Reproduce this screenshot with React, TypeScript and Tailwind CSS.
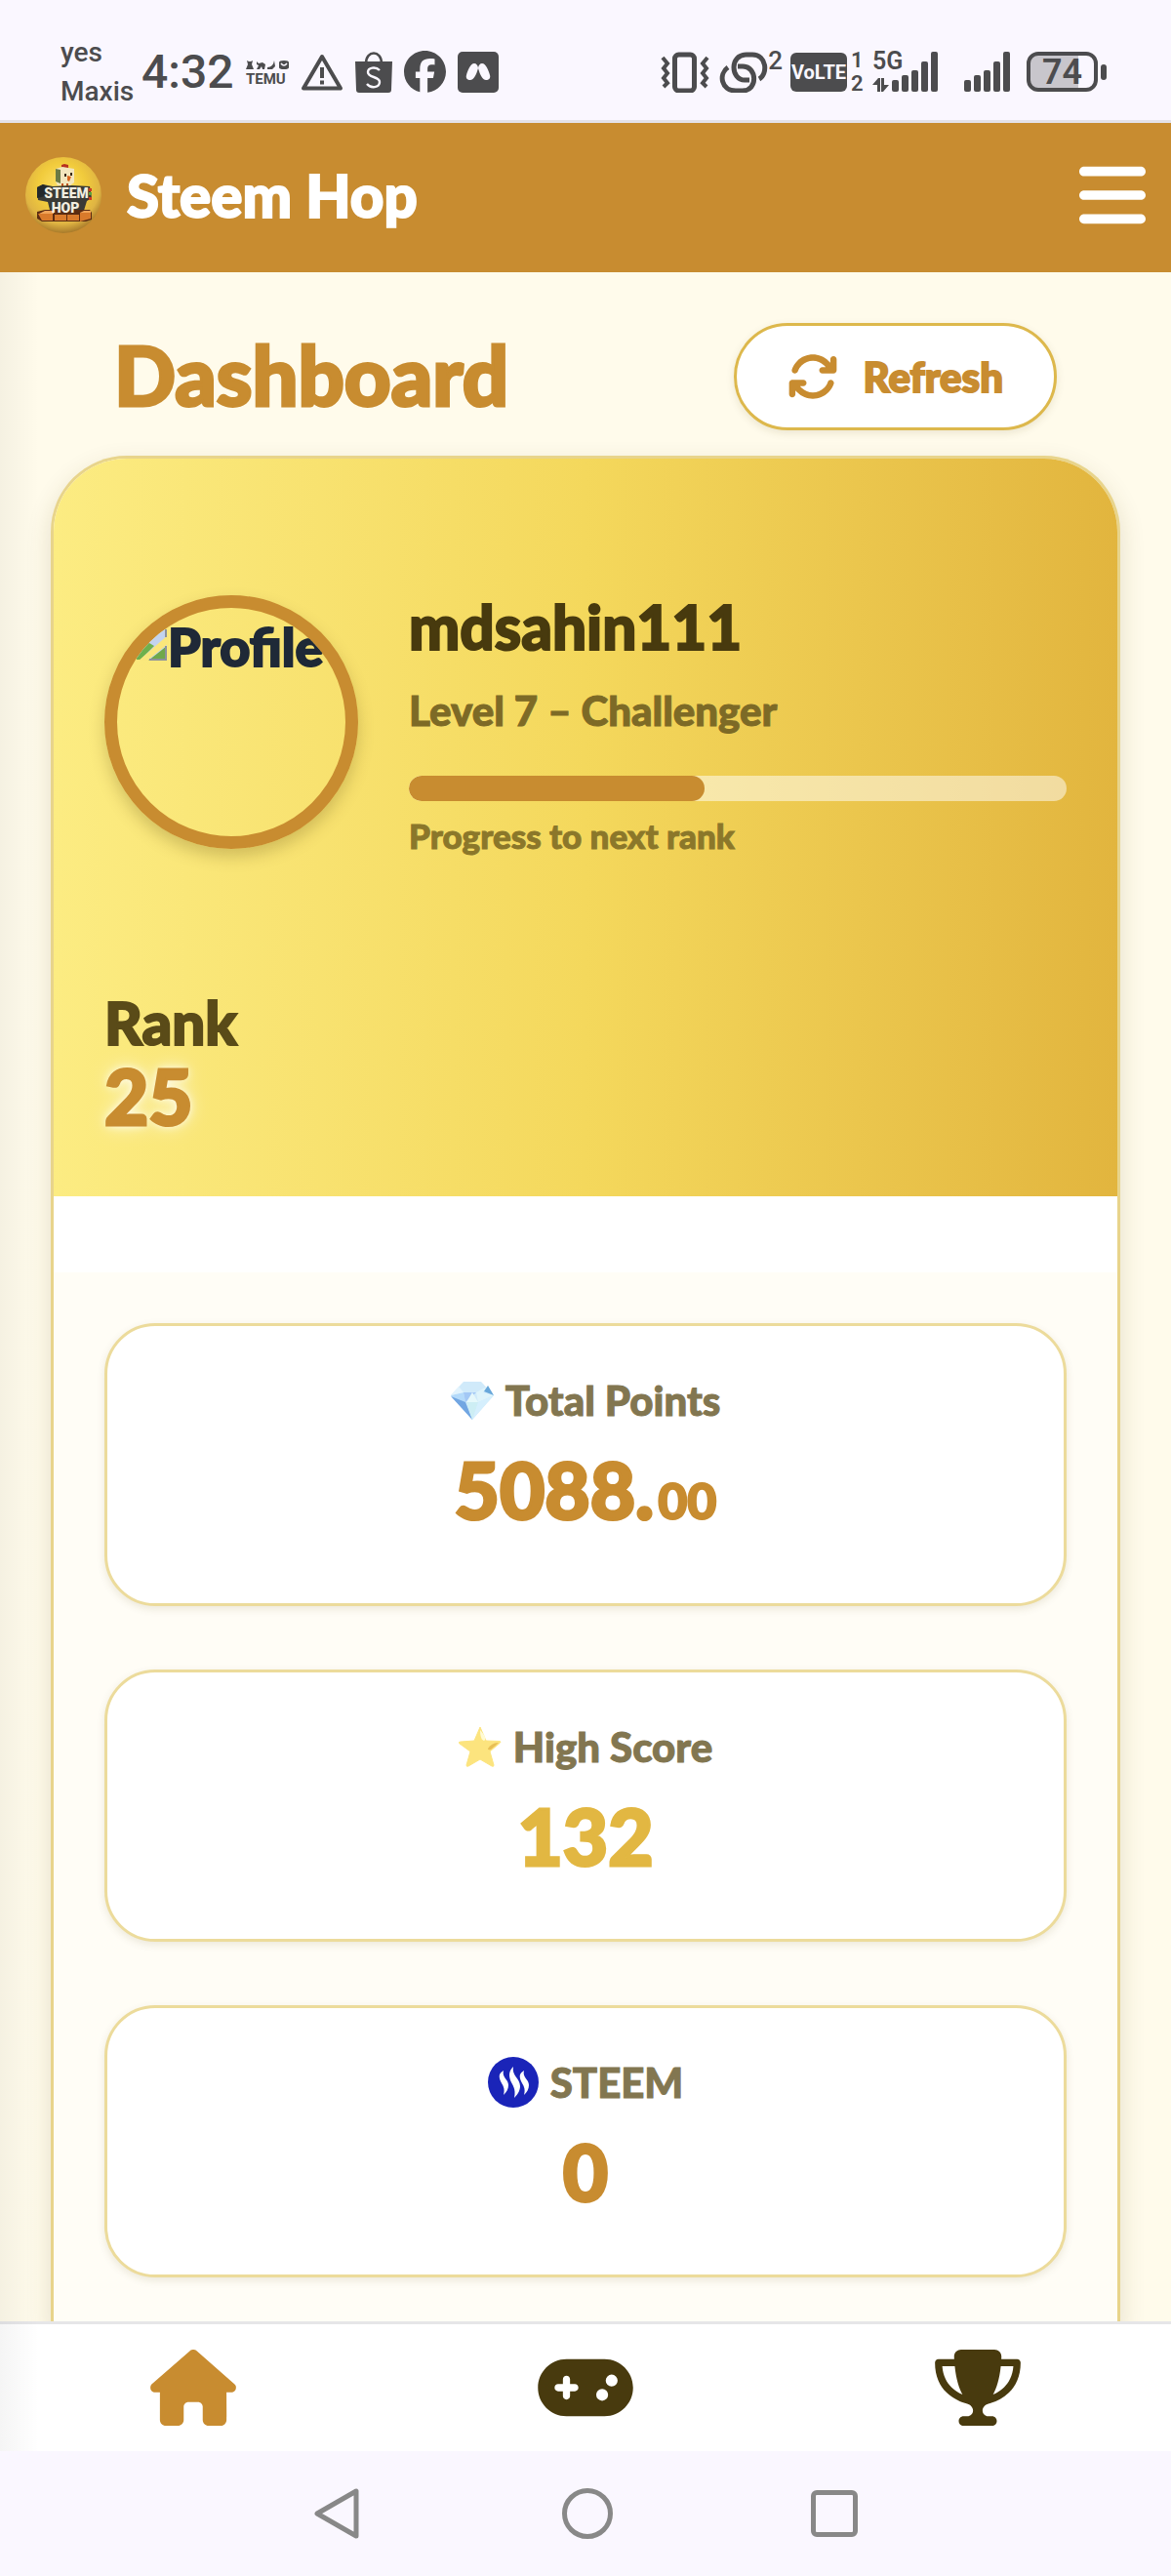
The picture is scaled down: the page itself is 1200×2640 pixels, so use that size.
import type { ReactNode } from "react";
import { FaArrowsRotate, FaBars, FaFacebook, FaGamepad, FaHouse, FaTrophy } from "react-icons/fa6";

function TemuIcon() {
  return (
    <svg viewBox="0 0 44 26" className="h-[26px] w-11 overflow-visible" fill="#4c4c4e" aria-label="Temu">
      <path d="M1 1l2 1h2l2-1-1 4 2 5H0l2-5zM11 2l2 2 4-1 3 2-1 5h-2l-1-3-2 3h-3l2-4-2-1zM22 8q6 0 7-7l1 6-3 3h-5zM34 3q0-2 5-2t5 2v5q0 2-5 2t-5-2z" />
      <path d="M36 4q3 4 6 0" fill="none" stroke="#faf7ff" strokeWidth="1.500" />
      <text x="0" y="25" fontFamily="Roboto" fontWeight="700" fontSize="15">TEMU</text>
    </svg>
  );
}

function WarningIcon() {
  return (
    <svg viewBox="0 0 44 38" className="h-[38px] w-11" fill="none" stroke="#4c4c4e" strokeWidth="4" strokeLinejoin="round" aria-label="Warning">
      <path d="M22 3L41 35.500H3z" />
      <path d="M22 14v11M22 27.500v4" />
    </svg>
  );
}

function ShopIcon() {
  return (
    <svg viewBox="0 0 38 42" className="h-[42px] w-[38px]" aria-label="Shopping">
      <path d="M0 10h38l-1 29q0 3-3 3H4q-3 0-3-3z" fill="#4c4c4e" />
      <path d="M11 12c0-14 16-14 16 0" fill="none" stroke="#4c4c4e" strokeWidth="2.500" />
      <path d="M25 19c-4-4-12-3-12 2 0 6 12 4 12 10 0 6-9 7-13 2" fill="none" stroke="#faf7ff" strokeWidth="2.400" />
    </svg>
  );
}

function MotoIcon() {
  return (
    <svg viewBox="0 0 42 42" className="size-[42px]" aria-label="App">
      <rect width="42" height="42" rx="5" fill="#4c4c4e" />
      <path d="M17 12c2 0 4 2 4 5l-1 3c-1 4-4 9-7 9s-5-2-4-5c1-4 4-12 8-12zM25 12c-2 0-4 2-4 5l1 3c1 4 4 9 7 9s5-2 4-5c-1-4-4-12-8-12z" fill="#faf7ff" />
    </svg>
  );
}

function VibrateIcon() {
  return (
    <svg viewBox="0 0 50 42" className="h-[42px] w-[50px]" fill="none" stroke="#4c4c4e" aria-label="Vibrate">
      <rect x="14.500" y="3" width="20" height="37" rx="4" strokeWidth="5" />
      <path d="M2 6l5 6-4 5 4 5-4 5 4 5-4 4M48 6l-5 6 4 5-4 5 4 5-4 5 4 4" strokeWidth="4" />
    </svg>
  );
}

function LinkIcon() {
  return (
    <svg viewBox="0 0 50 42" className="h-[42px] w-[50px]" fill="none" stroke="#4c4c4e" strokeWidth="5" aria-label="Linked">
      <path d="M31 29h-5c-14 0-16-26 2-26h6c15 0 16 20 7 25" />
      <path d="M19 15h5c15 0 16 25 0 25h-7c-15 0-18-17-8-24" />
    </svg>
  );
}

function SignalBars() {
  return (
    <svg viewBox="0 0 48 41" className="h-[41px] w-12" fill="#4c4c4e" aria-label="Signal">
      <rect x="0" y="29" width="7" height="12" rx="2" />
      <rect x="10" y="24" width="7" height="17" rx="2" />
      <rect x="20" y="19" width="7" height="22" rx="2" />
      <rect x="30" y="10" width="7" height="31" rx="2" />
      <rect x="40" y="0" width="7" height="41" rx="2" />
    </svg>
  );
}

function StatusBar() {
  return (
    <div className="flex h-[126px] shrink-0 items-center justify-between border-b-3 border-[#e4e2e9] bg-[#faf7ff] pt-[24px] pr-[66px] pl-[62px] font-['Roboto',sans-serif] text-[#4c4c4e]">
      <div className="flex items-center">
        <div className="w-[83px] text-[28px] leading-[40px] font-medium">
          <div>yes</div>
          <div>Maxis</div>
        </div>
        <div className="text-[48px] leading-[50px] font-medium">4:32</div>
        <div className="ml-3 flex items-center gap-[12px]">
          <TemuIcon />
          <WarningIcon />
          <ShopIcon />
          <FaFacebook className="size-[43px]" aria-label="Facebook" />
          <MotoIcon />
        </div>
      </div>
      <div className="flex items-center">
        <VibrateIcon />
        <div className="ml-2.5 flex items-start">
          <LinkIcon />
          <span className="-mt-1 text-[26px] leading-[26px] font-medium">2</span>
        </div>
        <div className="ml-2 flex h-10 w-[58px] items-center justify-center rounded-md bg-[#4c4c4e] text-[20px] font-bold text-[#faf7ff]">VoLTE</div>
        <div className="ml-1 w-[22px] text-[22px] leading-[24px] font-semibold">
          <div>1</div>
          <div>2</div>
        </div>
        <div className="relative">
          <div className="ml-[20px]">
            <SignalBars />
          </div>
          <span className="absolute -top-1 left-0 text-[25px] leading-[28px] font-semibold">5G</span>
          <svg viewBox="0 0 17 14" className="absolute bottom-0 left-0 h-3.5 w-[17px]" fill="#4c4c4e">
            <path d="M0 7l6-7h2v14H5V7zM17 7l-6 7H9V0h3v7z" />
          </svg>
        </div>
        <div className="ml-[26px]">
          <SignalBars />
        </div>
        <div className="ml-[16px] flex items-center gap-[3px]">
          <div className="flex h-[41px] w-[73px] items-center justify-center rounded-xl border-4 border-[#4c4c4e] bg-linear-to-r from-[#c8c6cc] from-75% to-[#faf7ff] to-75% text-[36px] leading-[36px] font-semibold">74</div>
          <div className="h-4 w-1.5 rounded-full bg-[#4c4c4e]" />
        </div>
      </div>
    </div>
  );
}

function Logo() {
  return (
    <svg viewBox="0 0 78 78" className="size-[78px]" aria-label="Steem Hop logo">
      <defs>
        <radialGradient id="coin" cx="0.48" cy="0.38" r="0.620">
          <stop offset="0" stopColor="#ffe36a" />
          <stop offset="0.500" stopColor="#f1cb3c" />
          <stop offset="0.800" stopColor="#dfb443" />
          <stop offset="1" stopColor="#a87a2a" />
        </radialGradient>
      </defs>
      <circle cx="39" cy="39" r="39" fill="url(#coin)" />
      <path d="M37 8l3-1 4 1v4h-7z" fill="#b8321f" />
      <path d="M31 12l7-2 12 2v14l-4 3H33l-2-4z" fill="#f3e6bd" />
      <path d="M31 12l5 1v14l-5-2z" fill="#6b7a45" />
      <path d="M40 17h2v3h-2zM46 16h2v3h-2z" fill="#3a2a18" />
      <path d="M43 19l4 1-2 5-2-1z" fill="#d9661e" />
      <path d="M37 27h2v5h-2zM42 27h2v5h-2z" fill="#c2541c" />
      <path d="M12 31l6-3 10 2 20-1 18 1 2 12-5 3-4 13H26l-3-12-10-2z" fill="#3b3b36" />
      <path d="M12 31l6-3 4 2-2 10-8 2z" fill="#23282b" />
      <path d="M65 32h3v3h-3zM65 41h3v3h-3z" fill="#cf3b22" />
      <path d="M65 36h3v3h-3z" fill="#5ea03c" />
      <path d="M12 56l8-2h46l2 3v7l-6 2H17l-5-3z" fill="#5b2c12" />
      <path d="M13 58h15v7H17zM30 59h12v6H30zM43 59h12v6H43zM56 57l11-1v7l-11 3z" fill="#d97a2b" />
      <path d="M14 58l6-3h9v3zM56 57l4-2h7v2z" fill="#f0a357" />
      <g fill="#f2eee0" fontFamily="Roboto" fontWeight="900">
        <text x="42" y="42" fontSize="14" textAnchor="middle">STEEM</text>
        <text x="41" y="57" fontSize="14" textAnchor="middle">HOP</text>
      </g>
    </svg>
  );
}

function BrokenImage() {
  return (
    <svg viewBox="0 0 32 32" className="size-8 shrink-0">
      <path d="M0 0h31v31H0z" fill="#c3d3ef" />
      <path d="M0 31V22q6-8 13-8l5 3-14 14z" fill="#6fb04c" />
      <path d="M12 32L31 17v14z" fill="#6fa84a" />
      <path d="M2 32L32 6v9L11 32z" fill="#fae67b" />
      <path d="M30 0v8M30 17v14H13" fill="none" stroke="#8d9299" strokeWidth="2" />
    </svg>
  );
}

function Gem() {
  return (
    <svg viewBox="0 0 44 40" className="h-10 w-11">
      <path d="M13 1h18L44 15 22 40 0 15z" fill="#d0eafa" />
      <path d="M0 15l13-3 2 10 7 18z" fill="#b4dafa" />
      <path d="M0 16l15 6 7 18z" fill="#72a6e2" />
      <path d="M15 22L13 12l13 0z" fill="#a3c8f5" />
      <path d="M0 15l13-3L8 6z" fill="#e2f3fd" />
      <path d="M26 12l11-6-4 6 11 3-16 7z" fill="#dff4fb" />
      <path d="M38 5l6 10-10-4z" fill="#68a7da" />
      <path d="M22 12l6 10H16z" fill="#e6f8fb" />
      <path d="M16 22h12l-6 18z" fill="#cdeef4" />
      <path d="M28 22l16-7-22 25z" fill="#d5effd" />
    </svg>
  );
}

function Star() {
  return (
    <svg viewBox="0 0 44 42" className="h-[42px] w-11">
      <path d="M22 1l6 14 14 .500q2 .500 0 2L32 26l4 14q0 2-2 1l-12-7-12 7q-2 1-2-1l4-14-11-8q-2-2 1-2l14-1z" fill="#fce47e" stroke="#fce47e" strokeLinejoin="round" />
      <path d="M22 4q0 10 4 11 3-2 0-6z" fill="#fffbd5" />
      <path d="M41 17q-7 0-11 6 0 2 3 1z" fill="#e8bf55" />
    </svg>
  );
}

function SteemMark() {
  return (
    <svg viewBox="0 0 52 52" className="size-[52px]">
      <circle cx="26" cy="26" r="26" fill="#1a24b8" />
      <g fill="#fff">
        <path d="M16 14c-2 7 5 9 5 15 0 4-2 7-5 10 2-7-1-10-3-14-2-5-2-8 3-11z" />
        <path d="M26 10c-2 9 7 12 7 20 0 5-3 9-6 12 2-10-2-13-4-18-2-6-1-10 3-14z" />
        <path d="M37 14c-2 7 5 9 5 15 0 4-2 7-5 10 2-7-1-10-3-14-2-5-2-8 3-11z" />
      </g>
    </svg>
  );
}

function StatCard({ icon, label, children }: { icon: ReactNode; label: string; children: ReactNode }) {
  return (
    <article className="rounded-[52px] border-3 border-[#ecdb9b] bg-white px-12 pt-[48px] pb-[66px] text-center shadow-[0_3px_8px_rgba(90,70,20,0.12)]">
      <h3 className="flex h-14 items-center justify-center gap-3 text-[42px] leading-[48px] text-[#827650] [-webkit-text-stroke:1px]">
        {icon}
        {label}
      </h3>
      <div className="mt-[23px] text-[80px] leading-[80px] text-[#c88c30] [-webkit-text-stroke:3px]">{children}</div>
    </article>
  );
}

export default function App() {
  return (
    <div className="flex h-screen flex-col bg-[#fffbeb] font-['Lato',sans-serif] font-black">
      <StatusBar />
      <header className="flex h-[153px] shrink-0 items-center justify-between bg-[#c88c30] px-[26px] pb-[5px] text-white">
        <div className="flex items-center gap-[26px]">
          <Logo />
          <span className="text-[60px] leading-[76px] [-webkit-text-stroke:2px]">Steem Hop</span>
        </div>
        <button aria-label="Menu">
          <FaBars className="h-[78px] w-[68px]" />
        </button>
      </header>

      <div className="relative flex min-h-0 flex-1 flex-col">
        <main className="min-h-0 flex-1 overflow-y-auto px-[52px] pt-[52px] [scrollbar-width:none]">
          <div className="mb-[26px] flex items-center justify-between px-[65px] text-[#c88c30]">
            <h1 className="pb-1 text-[83px] leading-[96px] [-webkit-text-stroke:3px]">Dashboard</h1>
            <button className="flex h-[110px] items-center gap-[26px] rounded-full border-3 border-[#ddb84c] bg-white px-[52px] text-[42px] shadow-[0_3px_8px_rgba(90,70,20,0.12)] [-webkit-text-stroke:2px]">
              <FaArrowsRotate className="size-[52px]" />
              Refresh
            </button>
          </div>

          <div className="overflow-hidden rounded-t-[78px] border-3 border-b-0 border-[#e8d48b] bg-white shadow-[0_10px_26px_rgba(90,70,20,0.16)]">
            <section className="bg-linear-to-r from-[#fcec82] via-[#f4d85c] to-[#e2b53e] px-[52px] pt-[132px] pb-16">
              <div className="flex items-center gap-[52px]">
                <div className="flex size-[260px] shrink-0 overflow-hidden rounded-full border-[13px] border-[#c88c30] pt-[10px] pl-[20px] text-[54px] leading-[60px] text-[#1f2937] shadow-[0_8px_16px_rgba(90,70,20,0.25)] [-webkit-text-stroke:2px]">
                  <div className="pt-[12px]">
                    <BrokenImage />
                  </div>
                  Profile
                </div>
                <div className="min-w-0 flex-1">
                  <h2 className="text-[62px] leading-[80px] text-[#483a0e] [-webkit-text-stroke:2px]">mdsahin111</h2>
                  <p className="mt-[22px] text-[42px] leading-[48px] text-[#7d6a26] [-webkit-text-stroke:1px]">Level 7 – Challenger</p>
                  <div className="mt-[43px] h-[26px] overflow-hidden rounded-full bg-white/50">
                    <div className="h-full w-[45%] rounded-full bg-[#c88c30]" />
                  </div>
                  <p className="mt-[13px] text-[35px] leading-[44px] text-[#8b772a] [-webkit-text-stroke:1px]">Progress to next rank</p>
                </div>
              </div>
              <div className="mt-[134px] text-[60px] leading-[72px] text-[#5a4b18] [-webkit-text-stroke:2px]">Rank</div>
              <div className="text-[78px] leading-[78px] text-[#c88c30] [-webkit-text-stroke:3px] [text-shadow:0_0_10px_#fff,0_0_20px_rgba(255,255,255,0.8)]">25</div>
            </section>

            <section className="mt-[78px] flex flex-col gap-[65px] bg-[#fffdf6] p-[52px]">
              <StatCard icon={<Gem />} label="Total Points">
                5088.<span className="ml-1 text-[52px] [-webkit-text-stroke:2px]">00</span>
              </StatCard>
              <StatCard icon={<Star />} label="High Score">
                <span className="text-[#e2b742]">132</span>
              </StatCard>
              <StatCard icon={<SteemMark />} label="STEEM">
                0
              </StatCard>
            </section>
          </div>
        </main>

        <nav className="flex h-[133px] shrink-0 items-center justify-around border-t-3 border-[#e6e6e8] bg-white text-[#483a0e]">
          <a href="#home" aria-label="Home" className="text-[#c88c30]">
            <FaHouse className="h-[78px] w-[88px]" />
          </a>
          <a href="#play" aria-label="Play">
            <FaGamepad className="h-[78px] w-[98px]" />
          </a>
          <a href="#leaderboard" aria-label="Leaderboard">
            <FaTrophy className="h-[78px] w-[88px]" />
          </a>
        </nav>
        <div className="pointer-events-none absolute inset-y-0 left-0 w-10 bg-linear-to-r from-black/4 to-transparent" />
      </div>

      <div className="flex h-32 shrink-0 items-center justify-center gap-[203px] bg-[#faf7ff]">
        <button aria-label="Back">
          <svg viewBox="0 0 52 52" className="size-[52px]" fill="none" stroke="#888" strokeWidth="5" strokeLinejoin="round">
            <path d="M44 3v46L4 26z" />
          </svg>
        </button>
        <button aria-label="Home screen" className="size-[52px] rounded-full border-5 border-[#888]" />
        <button aria-label="Recent apps" className="size-12 rounded-md border-5 border-[#888]" />
      </div>
    </div>
  );
}
